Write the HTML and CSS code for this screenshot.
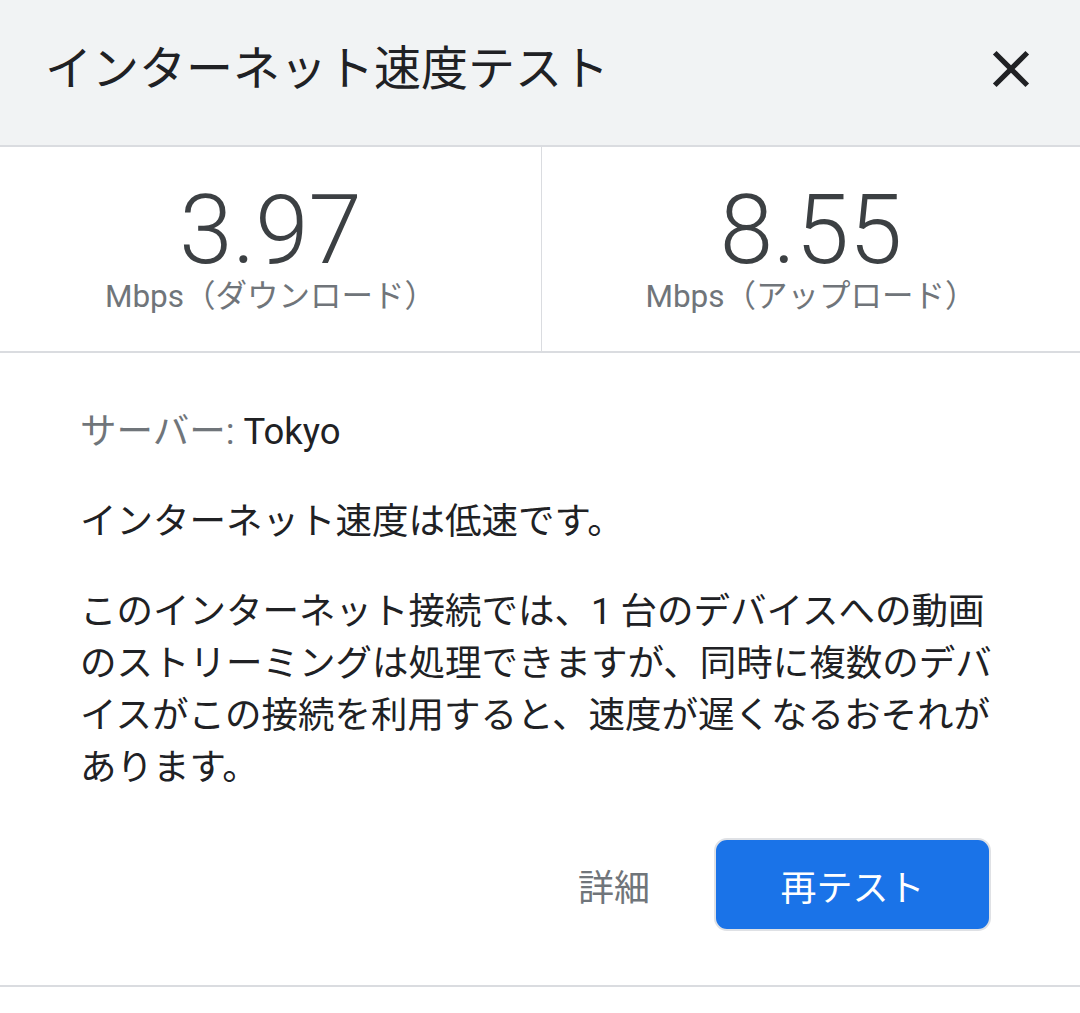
FILE: index.html
```html
<!DOCTYPE html>
<html lang="ja">
<head>
  <meta charset="UTF-8">
  <title>インターネット速度テスト</title>
  <link rel="stylesheet" href="styles.css">
</head>
<body>
  <div class="dialog">
    <div class="header">
      <h1 class="title">インターネット速度テスト</h1>
      <button class="close" aria-label="閉じる">
        <svg viewBox="0 0 24 24" width="62" height="62"><path d="M19 6.41L17.59 5 12 10.59 6.41 5 5 6.41 10.59 12 5 17.59 6.41 19 12 13.41 17.59 19 19 17.59 13.41 12z" fill="#202124"/></svg>
      </button>
    </div>

    <div class="stats">
      <div class="stat">
        <div class="value">3.97</div>
        <div class="unit">Mbps（ダウンロード）</div>
      </div>
      <div class="stat">
        <div class="value">8.55</div>
        <div class="unit">Mbps（アップロード）</div>
      </div>
    </div>

    <div class="content">
      <p class="server"><span class="muted">サーバー:</span> Tokyo</p>
      <p class="line">インターネット速度は低速です。</p>
      <p class="desc">このインターネット接続では、1 台のデバイスへの動画のストリーミングは処理できますが、同時に複数のデバイスがこの接続を利用すると、速度が遅くなるおそれがあります。</p>
      <div class="actions">
        <button class="text-btn">詳細</button>
        <button class="primary">再テスト</button>
      </div>
    </div>
  </div>
</body>
</html>
```

FILE: styles.css
```css
body { margin: 0; background: #fff; font-family: Roboto, "Noto Sans CJK JP", sans-serif; color: #202124; }
button { font-family: inherit; cursor: pointer; }

.header {
  display: flex; align-items: center; justify-content: space-between;
  height: 137px; padding: 0 38px 8px 45px;
  background: #f1f3f4; border-bottom: 2px solid #dadce0;
}
.title { margin: 0; font-size: 47px; font-weight: 400; line-height: 1; color: #202124; }
.close { border: none; background: none; padding: 0; width: 62px; height: 62px; display: flex; }

.stats { display: flex; height: 204px; border-bottom: 2px solid #dadce0; }
.stat { flex: 0 0 541px; padding-top: 27px; text-align: center; box-sizing: border-box; }
.stat + .stat { flex: 1; border-left: 1px solid #dadce0; }
.value { font-size: 96px; font-weight: 300; line-height: 112px; color: #3c4043; }
.unit { font-size: 31.5px; line-height: 22px; color: #70757a; }

.content { padding: 53px 80px 54px; width: 920px; border-bottom: 2px solid #dadce0; }
.content p { margin: 0; font-size: 36.5px; line-height: 52px; }
.server { margin-bottom: 38px !important; }
.muted { color: #70757a; }
.line { margin-bottom: 38px !important; }
.desc { color: #202124; }

.actions { display: flex; justify-content: flex-end; align-items: center; gap: 44px; margin-top: 44px; padding-right: 9px; }
.text-btn { border: none; background: none; padding: 0 20px; font-size: 36px; color: #70757a; }
.primary {
  width: 277px; height: 93px; border: 2px solid #dfe1e5; border-radius: 13px;
  background: #1a73e8; color: #fff; font-size: 36px;
}
```
